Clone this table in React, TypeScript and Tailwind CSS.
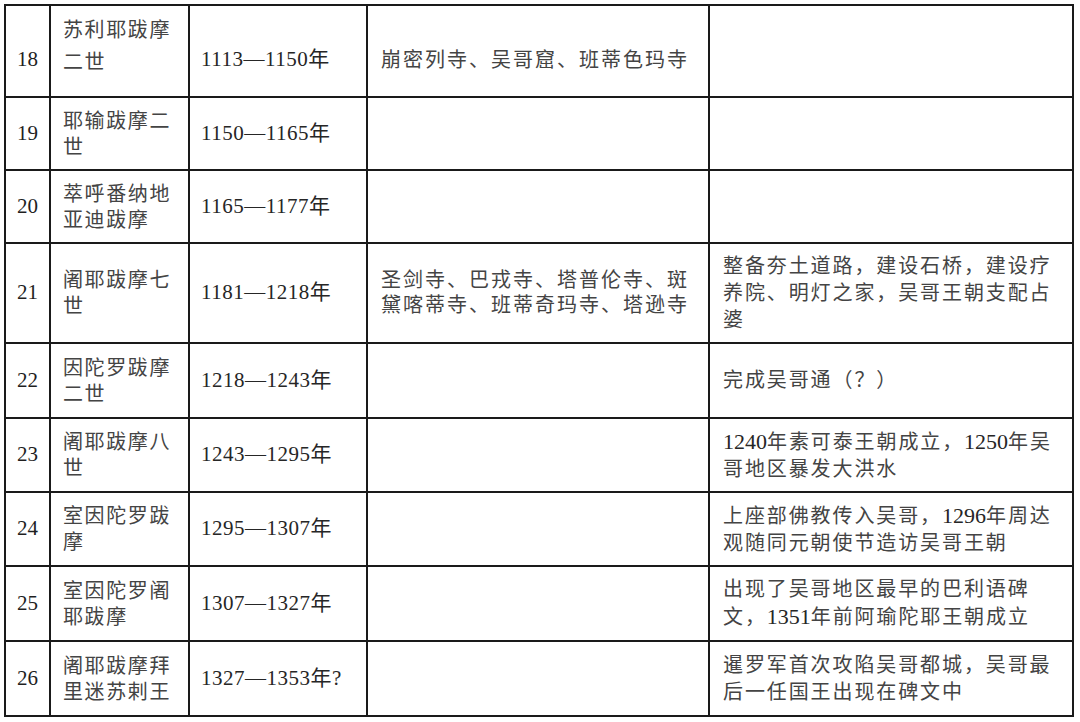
import React from "react";

type Row = {
  n: string;
  name: string[];
  years: string;
  temples?: string[];
  events?: string[];
  h: string;
  first?: boolean;
};

const rows: Row[] = [
  { n: "18", name: ["苏利耶跋摩", "二世"], years: "1113—1150年", temples: ["崩密列寺、吴哥窟、班蒂色玛寺"], h: "h-[92px]", first: true },
  { n: "19", name: ["耶输跋摩二", "世"], years: "1150—1165年", h: "h-[73px]" },
  { n: "20", name: ["萃呼番纳地", "亚迪跋摩"], years: "1165—1177年", h: "h-[73px]" },
  {
    n: "21",
    name: ["阇耶跋摩七", "世"],
    years: "1181—1218年",
    temples: ["圣剑寺、巴戎寺、塔普伦寺、斑", "黛喀蒂寺、班蒂奇玛寺、塔逊寺"],
    events: ["整备夯土道路，建设石桥，建设疗", "养院、明灯之家，吴哥王朝支配占", "婆"],
    h: "h-[100px]",
  },
  { n: "22", name: ["因陀罗跋摩", "二世"], years: "1218—1243年", events: ["完成吴哥通（？）"], h: "h-[75px]" },
  { n: "23", name: ["阇耶跋摩八", "世"], years: "1243—1295年", events: ["1240年素可泰王朝成立，1250年吴", "哥地区暴发大洪水"], h: "h-[74px]" },
  { n: "24", name: ["室因陀罗跋", "摩"], years: "1295—1307年", events: ["上座部佛教传入吴哥，1296年周达", "观随同元朝使节造访吴哥王朝"], h: "h-[74px]" },
  { n: "25", name: ["室因陀罗阇", "耶跋摩"], years: "1307—1327年", events: ["出现了吴哥地区最早的巴利语碑", "文，1351年前阿瑜陀耶王朝成立"], h: "h-[75px]" },
  { n: "26", name: ["阇耶跋摩拜", "里迷苏剌王"], years: "1327—1353年?", events: ["暹罗军首次攻陷吴哥都城，吴哥最", "后一任国王出现在碑文中"], h: "h-[75px]" },
];

const font = "font-['Liberation_Serif','Noto_Sans_CJK_SC',serif]";

function Text({ s }: { s: string }) {
  const parts = s.split(/(\d+)/);
  return (
    <>
      {parts.map((p, i) =>
        /^\d+$/.test(p) ? (
          <span key={i} className="text-[22px] tracking-normal text-[#262626]">
            {p}
          </span>
        ) : (
          <React.Fragment key={i}>{p}</React.Fragment>
        )
      )}
    </>
  );
}

function Lines({ lines }: { lines: string[] }) {
  return (
    <div className="flex flex-col">
      {lines.map((l, i) => (
        <span key={i} className="block whitespace-nowrap">
          <Text s={l} />
        </span>
      ))}
    </div>
  );
}

export default function App() {
  return (
    <div className={`w-[1080px] h-[722px] bg-white overflow-hidden ${font}`}>
      <div className="pl-[4px] pt-[4px]">
        <div className="w-fit border-t-2 border-l-2 border-[#1a1a1a]">
          {rows.map((r) => (
            <div
              key={r.n}
              className={`grid grid-cols-[45px_139px_178px_342px_364px] ${r.h}`}
            >
              <div
                className={`flex items-center justify-center border-r-2 border-b-2 border-[#1a1a1a] text-[21px] text-[#1f1f1f] ${
                  r.first ? "pt-[18px]" : ""
                }`}
              >
                {r.n}
              </div>
              <div
                className={`flex border-r-2 border-b-2 border-[#1a1a1a] pl-[12px] text-[20px] tracking-[1.6px] text-[#444] ${
                  r.first ? "items-start pt-[8px] leading-[32px]" : "items-center leading-[26px]"
                }`}
              >
                <Lines lines={r.name} />
              </div>
              <div
                className={`flex items-center border-r-2 border-b-2 border-[#1a1a1a] pl-[11px] text-[21px] tracking-[0.5px] text-[#262626] ${
                  r.first ? "pt-[18px]" : ""
                }`}
              >
                <span className="whitespace-nowrap">{r.years}</span>
              </div>
              <div
                className={`flex items-center border-r-2 border-b-2 border-[#1a1a1a] pl-[13px] text-[20px] tracking-[2px] leading-[25px] text-[#444] ${
                  r.first ? "pt-[18px]" : ""
                }`}
              >
                {r.temples && <Lines lines={r.temples} />}
              </div>
              <div className="flex items-center border-r-2 border-b-2 border-[#1a1a1a] pl-[13px] text-[20px] tracking-[1.9px] leading-[27px] text-[#444]">
                {r.events && <Lines lines={r.events} />}
              </div>
            </div>
          ))}
        </div>
      </div>
    </div>
  );
}
